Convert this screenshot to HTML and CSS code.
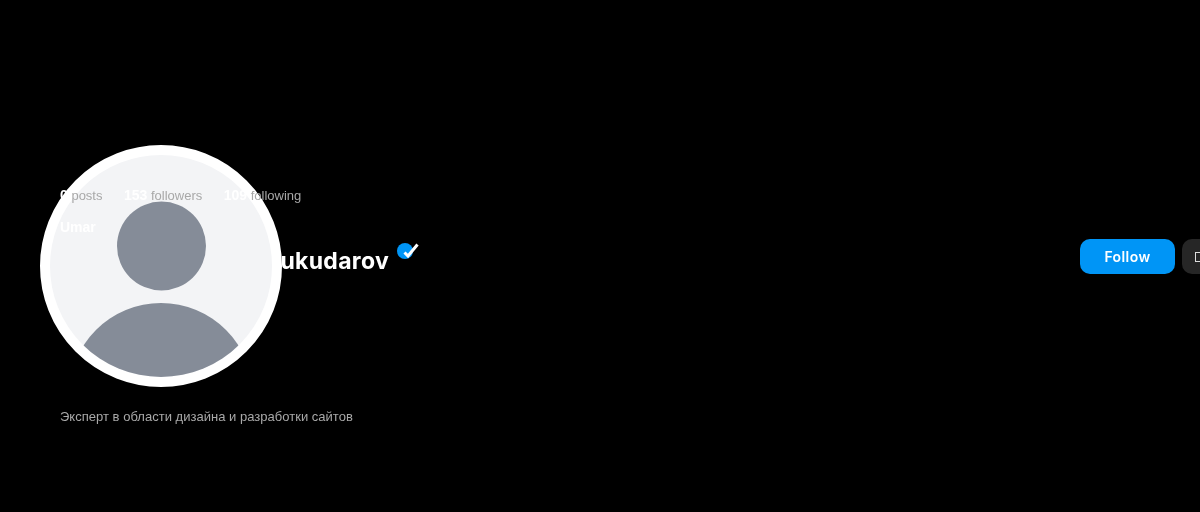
FILE: index.html
```html
<!DOCTYPE html>
<html>
<head>
<meta charset="UTF-8">
<title>Umar Bukudarov</title>
<link rel="stylesheet" href="styles.css">
</head>
<body>
<!-- avatar sits over the header -->
<div class="avatar">
	<svg class="avatar-pic" viewBox="0 0 222 222" width="222" height="222">
		<circle cx="111.500" cy="91" r="44.500" fill="#858c98"/>
		<circle cx="111" cy="240" r="92" fill="#858c98"/>
	</svg>
</div>
<div class="profile">
	<div class="stats">
		<span><b>0</b> posts</span>
		<span><b>153</b> followers</span>
		<span><b>109</b> following</span>
	</div>
	<div class="nick">Umar</div>
	<div class="name-row">
		<h1 class="name">Umar Bukudarov</h1>
		<svg class="badge" viewBox="0 0 24 20" width="24" height="20">
			<circle cx="8" cy="10" r="8" fill="#0095f6"/>
			<path d="M7.500 11.500l3.500 3.500 9.500-11.500" fill="none" stroke="#fff" stroke-width="3"/>
		</svg>
		<div class="actions">
			<button class="btn btn-follow">Follow</button>
			<button class="btn btn-more"><span class="more-icon"></span></button>
		</div>
	</div>
	<p class="bio">Эксперт в области дизайна и разработки сайтов</p>
</div>
</body>
</html>
```

FILE: styles.css
```css
html,body{margin:0;height:512px;overflow:hidden;background:#000}
body{font-family:"Liberation Sans",Arial,sans-serif;position:relative}
.profile{padding:187px 0 0 60px}
.stats{position:relative;z-index:2;display:flex;gap:21.500px;height:17px;font-size:13px;line-height:17px;color:#a8a8a8;will-change:transform}
.stats b{font-size:14px;color:#fff}
.nick{position:relative;z-index:2;margin-top:15px;height:17px;font-size:14px;line-height:17px;font-weight:bold;color:#fff;will-change:transform}
.name-row{display:flex;align-items:flex-start;height:35px;margin-top:3px}
.name{margin:7px 0 0 0;width:329px;flex:none;text-align:right;white-space:nowrap;font-family:Inter,sans-serif;font-size:23px;line-height:30px;font-weight:700;letter-spacing:.3px;color:#fff;will-change:transform}
.badge{margin:2px 0 0 8px;flex:none}
.actions{display:flex;gap:7px;margin-left:659px;flex:none}
.btn{height:35px;border:none;border-radius:10px;font-family:Inter,sans-serif;font-size:14px;font-weight:600;color:#fff;letter-spacing:.4px;will-change:transform}
.btn-follow{width:95px;background:#0095f6}
.btn-more{display:flex;align-items:center;width:40px;padding:0 0 0 13px;background:#262626}
.more-icon{display:block;box-sizing:border-box;width:9px;height:10px;border:1px solid #ddd}
.bio{margin:134px 0 0 0;font-size:13px;letter-spacing:.02px;line-height:18px;color:#a8a8a8;will-change:transform}
.avatar{position:absolute;left:40px;top:145px;z-index:1;width:222px;height:222px;border:10px solid #fff;border-radius:50%;background:#f3f4f6;overflow:hidden}
.avatar-pic{display:block}
```
